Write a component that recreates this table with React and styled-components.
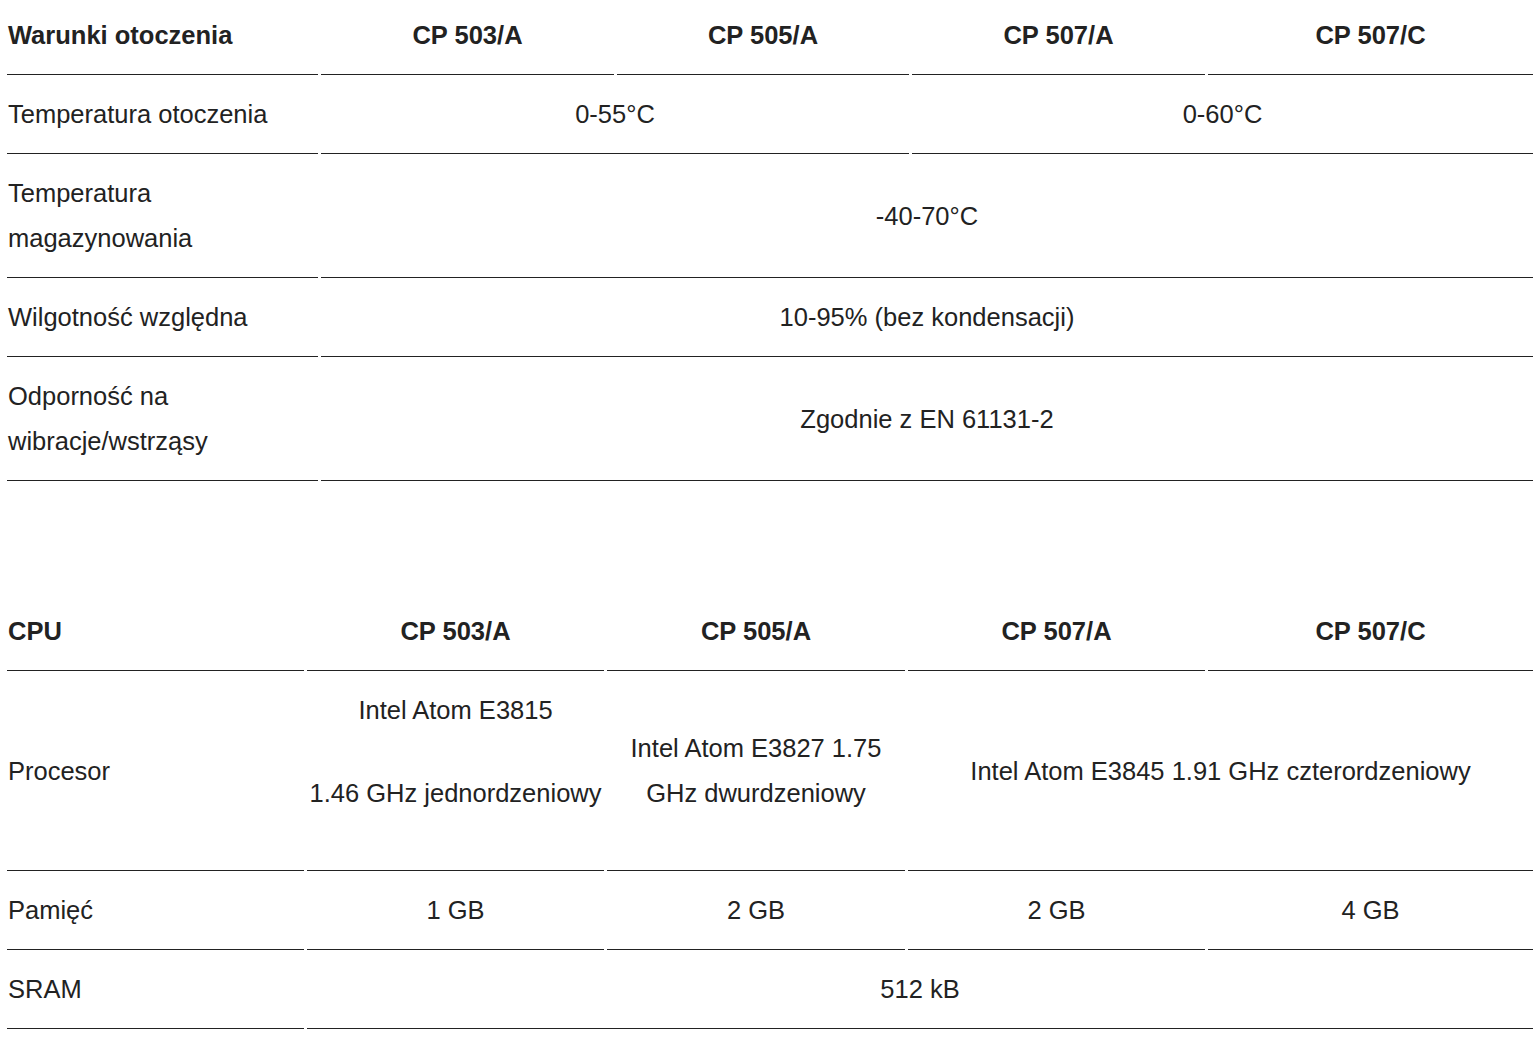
import React from "react";
import styled, { createGlobalStyle } from "styled-components";

const GlobalStyle = createGlobalStyle`
  html, body {
    margin: 0;
    padding: 0;
    background: #ffffff;
  }
  body {
    font-family: "Liberation Sans", Arial, Helvetica, sans-serif;
    font-size: 25.5px;
    line-height: 45px;
    color: #222222;
  }
`;

const Page = styled.div`
  padding: 0 4px 20px 7px;
`;

const SpecTable = styled.div`
  display: grid;
  width: 1526px;
  grid-template-columns: ${(p) => p.$cols};
  column-gap: 3px;
  row-gap: 0;
  margin-top: ${(p) => p.$top || 0}px;
`;

const Cell = styled.div`
  grid-column: span ${(p) => p.$span || 1};
  display: flex;
  flex-direction: column;
  justify-content: center;
  align-items: ${(p) => (p.$left ? "flex-start" : "center")};
  text-align: ${(p) => (p.$left ? "left" : "center")};
  padding: 17px 1px 16px;
  border-bottom: 1px solid #222222;
  min-width: 0;
`;

const HeadCell = styled(Cell)`
  padding-top: 13px;
  font-weight: 700;
`;

const Para = styled.p`
  margin: 0 0 38px;
`;

const models = ["CP 503/A", "CP 505/A", "CP 507/A", "CP 507/C"];

function Header({ title }) {
  return (
    <>
      <HeadCell $left>{title}</HeadCell>
      {models.map((m) => (
        <HeadCell key={m}>{m}</HeadCell>
      ))}
    </>
  );
}

export default function App() {
  return (
    <>
      <GlobalStyle />
      <Page>
        <SpecTable $cols="311px 293px 292px 293px 1fr">
          <Header title="Warunki otoczenia" />

          <Cell $left>Temperatura otoczenia</Cell>
          <Cell $span={2}>0-55°C</Cell>
          <Cell $span={2}>0-60°C</Cell>

          <Cell $left>Temperatura magazynowania</Cell>
          <Cell $span={4}>-40-70°C</Cell>

          <Cell $left>Wilgotność względna</Cell>
          <Cell $span={4}>10-95% (bez kondensacji)</Cell>

          <Cell $left>Odporność na wibracje/wstrząsy</Cell>
          <Cell $span={4}>Zgodnie z EN 61131-2</Cell>
        </SpecTable>

        <SpecTable $cols="297px 297px 298px 297px 1fr" $top={115}>
          <Header title="CPU" />

          <Cell $left>Procesor</Cell>
          <Cell>
            <Para>Intel Atom E3815</Para>
            <Para>1.46 GHz jednordzeniowy</Para>
          </Cell>
          <Cell>Intel Atom E3827 1.75 GHz dwurdzeniowy</Cell>
          <Cell $span={2}>Intel Atom E3845 1.91 GHz czterordzeniowy</Cell>

          <Cell $left>Pamięć</Cell>
          <Cell>1 GB</Cell>
          <Cell>2 GB</Cell>
          <Cell>2 GB</Cell>
          <Cell>4 GB</Cell>

          <Cell $left>SRAM</Cell>
          <Cell $span={4}>512 kB</Cell>
        </SpecTable>
      </Page>
    </>
  );
}
